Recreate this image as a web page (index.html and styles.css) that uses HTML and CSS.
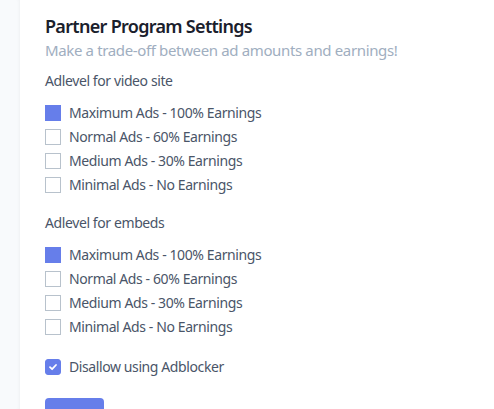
FILE: index.html
```html
<!DOCTYPE html>
<html>
<head>
<meta charset="utf-8">
<link rel="stylesheet" href="styles.css">
</head>
<body>
<div class="layout">
  <aside class="side"></aside>
  <main class="card">
    <h1 class="title">Partner Program Settings</h1>
    <p class="subtitle">Make a trade-off between ad amounts and earnings!</p>

    <section class="group">
      <div class="group-label">Adlevel for video site</div>
      <ul class="options">
        <li class="option"><span class="box filled"></span><span>Maximum Ads - 100% Earnings</span></li>
        <li class="option"><span class="box"></span><span>Normal Ads - 60% Earnings</span></li>
        <li class="option"><span class="box"></span><span>Medium Ads - 30% Earnings</span></li>
        <li class="option"><span class="box"></span><span>Minimal Ads - No Earnings</span></li>
      </ul>
    </section>

    <section class="group group-2">
      <div class="group-label">Adlevel for embeds</div>
      <ul class="options">
        <li class="option"><span class="box filled"></span><span>Maximum Ads - 100% Earnings</span></li>
        <li class="option"><span class="box"></span><span>Normal Ads - 60% Earnings</span></li>
        <li class="option"><span class="box"></span><span>Medium Ads - 30% Earnings</span></li>
        <li class="option"><span class="box"></span><span>Minimal Ads - No Earnings</span></li>
      </ul>
    </section>

    <label class="option check-row"><span class="box checked"><svg width="10" height="10" viewBox="0 0 10 10"><path d="M2 5.2 L4.1 7.2 L8 3" fill="none" stroke="#fff" stroke-width="1.8" stroke-linecap="round" stroke-linejoin="round"/></svg></span><span>Disallow using Adblocker</span></label>

    <button class="save"></button>
  </main>
</div>
</body>
</html>
```

FILE: styles.css
```css
* { box-sizing: border-box; }
html, body { margin: 0; padding: 0; background: #fff; }
body {
  font-family: "Noto Sans", "Open Sans", sans-serif;
  width: 494px;
  height: 409px;
  overflow: hidden;
}
.layout { display: flex; height: 409px; overflow: hidden; }
.side {
  width: 20px;
  flex: none;
  background: #f8fafc;
  box-shadow: inset -3px 0 4px -3px rgba(0,0,0,0.06);
}
.card {
  flex: 1;
  padding: 14px 0 0 25px;
  background: #fff;
  overflow: hidden;
}
.title {
  margin: 0;
  font-size: 18px;
  font-weight: 600;
  color: #1a202c;
  line-height: 24px;
  letter-spacing: -0.7px;
}
.subtitle {
  margin: 2px 0 0;
  font-size: 15px;
  color: #a0aec0;
  line-height: 20px;
  letter-spacing: -0.36px;
}
.group { margin-top: 11px; }
.group-2 { margin-top: 18px; }
.group-label {
  font-size: 14px;
  color: #4a5568;
  line-height: 20px;
  letter-spacing: -0.4px;
}
.options {
  list-style: none;
  margin: 12px 0 0;
  padding: 0;
  display: flex;
  flex-direction: column;
  gap: 4px;
}
.option {
  display: flex;
  align-items: center;
  gap: 8px;
  font-size: 14px;
  color: #4a5568;
  line-height: 20px;
  letter-spacing: -0.4px;
}
.box {
  width: 16px;
  height: 16px;
  border: 1px solid #b8c2cc;
  flex: none;
  display: flex;
  align-items: center;
  justify-content: center;
}
.box.filled { background: #667eea; border-color: #667eea; }
.box.checked { background: #667eea; border-color: #667eea; border-radius: 3px; }
.check-row { margin-top: 20px; }
.save {
  display: block;
  margin-top: 21px;
  width: 59px;
  height: 30px;
  border: 0;
  border-radius: 4px;
  background: #667eea;
  padding: 0;
}
```
